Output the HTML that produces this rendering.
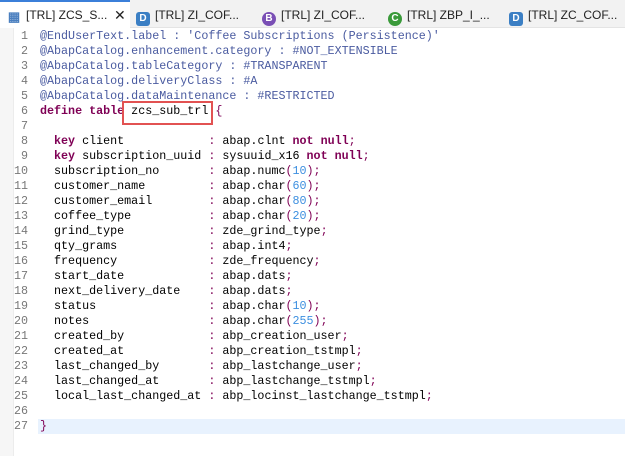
<!DOCTYPE html>
<html><head><meta charset="utf-8"><style>
*{margin:0;padding:0;box-sizing:border-box}
body{width:625px;height:456px;background:#fff;position:relative;overflow:hidden;font-family:"Liberation Sans",sans-serif}
.tabs{position:absolute;left:0;top:0;width:625px;height:28px;background:#f2f2f2;border-bottom:1px solid #e4e4e4}
.tab{position:absolute;top:0;height:28px;font-size:12px;color:#222;line-height:30px;white-space:nowrap}
.act{left:0;width:130px;background:#fff;border-top:2px solid #3b7fd9;line-height:27px}
.ic{display:inline-block;width:14px;height:14px;border-radius:3px;vertical-align:-2px;margin-right:5px;color:#fff;font-size:10px;font-weight:bold;text-align:center;line-height:14px}
.gutter{position:absolute;left:0;top:28px;width:14px;height:428px;background:#f6f6f6;border-right:1px solid #ececec}
.code{position:absolute;left:0;top:29px;font-family:"Liberation Mono",monospace;font-size:11.7px;line-height:15px;white-space:pre}
.ln{display:inline-block;width:28px;text-align:right;color:#787878;margin-right:12px}
.a{color:#4a5ba0}.k{color:#7f0055;font-weight:bold}.n{color:#3d8fe0}.p{color:#7f0055}
.hl{position:absolute;left:38px;top:419px;width:587px;height:15px;background:#e8f2fe}
.box{position:absolute;left:122px;top:101px;width:91px;height:24px;border:2px solid #e25252}
</style></head><body>
<div class="tabs">
<div class="tab act" style="padding-left:7px"><span class="ic" style="color:#4a7fbf;font-size:13px;border-radius:0">▦</span>[TRL] ZCS_S...<span style="position:absolute;left:114px;font-size:14px">✕</span></div>
<div class="tab" style="left:136px"><span class="ic" style="background:#3b7fc4">D</span>[TRL] ZI_COF...</div>
<div class="tab" style="left:262px"><span class="ic" style="background:#7a4fb5;border-radius:7px">B</span>[TRL] ZI_COF...</div>
<div class="tab" style="left:388px"><span class="ic" style="background:#3a9a3a;border-radius:7px">C</span>[TRL] ZBP_I_...</div>
<div class="tab" style="left:509px"><span class="ic" style="background:#3b7fc4">D</span>[TRL] ZC_COF...</div>
</div>
<div class="gutter"></div>
<div class="hl"></div>
<div class="code"><span class="ln">1</span><span class="a">@EndUserText.label : 'Coffee Subscriptions (Persistence)'</span>
<span class="ln">2</span><span class="a">@AbapCatalog.enhancement.category : #NOT_EXTENSIBLE</span>
<span class="ln">3</span><span class="a">@AbapCatalog.tableCategory : #TRANSPARENT</span>
<span class="ln">4</span><span class="a">@AbapCatalog.deliveryClass : #A</span>
<span class="ln">5</span><span class="a">@AbapCatalog.dataMaintenance : #RESTRICTED</span>
<span class="ln">6</span><span class="k">define table</span> zcs_sub_trl <span class="p">{</span>
<span class="ln">7</span>
<span class="ln">8</span>  <span class="k">key</span> client            <span class="p">:</span> abap.clnt <span class="k">not null</span><span class="p">;</span>
<span class="ln">9</span>  <span class="k">key</span> subscription_uuid <span class="p">:</span> sysuuid_x16 <span class="k">not null</span><span class="p">;</span>
<span class="ln">10</span>  subscription_no       <span class="p">:</span> abap.numc<span class="p">(</span><span class="n">10</span><span class="p">);</span>
<span class="ln">11</span>  customer_name         <span class="p">:</span> abap.char<span class="p">(</span><span class="n">60</span><span class="p">);</span>
<span class="ln">12</span>  customer_email        <span class="p">:</span> abap.char<span class="p">(</span><span class="n">80</span><span class="p">);</span>
<span class="ln">13</span>  coffee_type           <span class="p">:</span> abap.char<span class="p">(</span><span class="n">20</span><span class="p">);</span>
<span class="ln">14</span>  grind_type            <span class="p">:</span> zde_grind_type<span class="p">;</span>
<span class="ln">15</span>  qty_grams             <span class="p">:</span> abap.int4<span class="p">;</span>
<span class="ln">16</span>  frequency             <span class="p">:</span> zde_frequency<span class="p">;</span>
<span class="ln">17</span>  start_date            <span class="p">:</span> abap.dats<span class="p">;</span>
<span class="ln">18</span>  next_delivery_date    <span class="p">:</span> abap.dats<span class="p">;</span>
<span class="ln">19</span>  status                <span class="p">:</span> abap.char<span class="p">(</span><span class="n">10</span><span class="p">);</span>
<span class="ln">20</span>  notes                 <span class="p">:</span> abap.char<span class="p">(</span><span class="n">255</span><span class="p">);</span>
<span class="ln">21</span>  created_by            <span class="p">:</span> abp_creation_user<span class="p">;</span>
<span class="ln">22</span>  created_at            <span class="p">:</span> abp_creation_tstmpl<span class="p">;</span>
<span class="ln">23</span>  last_changed_by       <span class="p">:</span> abp_lastchange_user<span class="p">;</span>
<span class="ln">24</span>  last_changed_at       <span class="p">:</span> abp_lastchange_tstmpl<span class="p">;</span>
<span class="ln">25</span>  local_last_changed_at <span class="p">:</span> abp_locinst_lastchange_tstmpl<span class="p">;</span>
<span class="ln">26</span>
<span class="ln">27</span><span class="p">}</span></div>
<div class="box"></div>
</body></html>
